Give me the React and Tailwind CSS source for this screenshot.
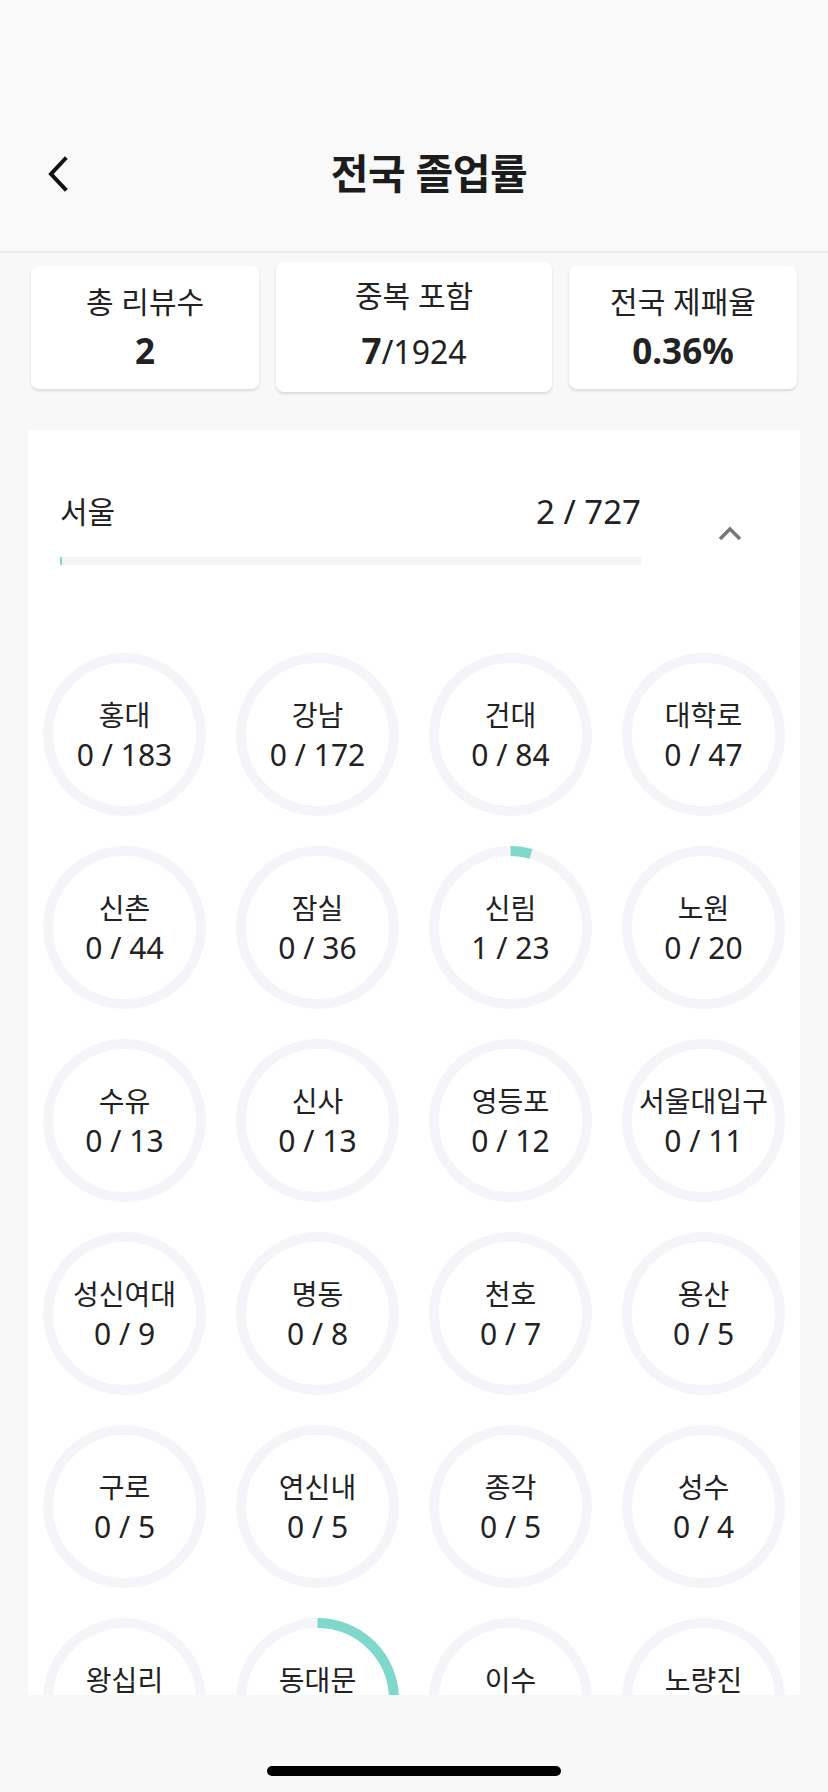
import React from 'react'

const regions = [
  { name: '홍대', done: 0, total: 183 },
  { name: '강남', done: 0, total: 172 },
  { name: '건대', done: 0, total: 84 },
  { name: '대학로', done: 0, total: 47 },
  { name: '신촌', done: 0, total: 44 },
  { name: '잠실', done: 0, total: 36 },
  { name: '신림', done: 1, total: 23 },
  { name: '노원', done: 0, total: 20 },
  { name: '수유', done: 0, total: 13 },
  { name: '신사', done: 0, total: 13 },
  { name: '영등포', done: 0, total: 12 },
  { name: '서울대입구', done: 0, total: 11 },
  { name: '성신여대', done: 0, total: 9 },
  { name: '명동', done: 0, total: 8 },
  { name: '천호', done: 0, total: 7 },
  { name: '용산', done: 0, total: 5 },
  { name: '구로', done: 0, total: 5 },
  { name: '연신내', done: 0, total: 5 },
  { name: '종각', done: 0, total: 5 },
  { name: '성수', done: 0, total: 4 },
  { name: '왕십리', done: 0, total: 4 },
  { name: '동대문', done: 1, total: 4 },
  { name: '이수', done: 0, total: 3 },
  { name: '노량진', done: 0, total: 3 },
]

const font = { fontFamily: '"Noto Sans", "Noto Sans CJK KR", sans-serif' }

const Ring = ({ name, done, total }) => {
  const r = 76.5
  const c = 2 * Math.PI * r
  const len = total ? (done / total) * c : 0
  return (
    <div className="flex h-[193px] items-center justify-center">
      <div className="relative h-[163px] w-[163px]">
        <svg width="163" height="163" viewBox="0 0 163 163" className="absolute inset-0 -rotate-90">
          <circle cx="81.5" cy="81.5" r={r} fill="none" stroke="#f5f5f9" strokeWidth="10" />
          {done > 0 && (
            <circle
              cx="81.5"
              cy="81.5"
              r={r}
              fill="none"
              stroke="#80d8cd"
              strokeWidth="10"
              strokeDasharray={`${len} ${c}`}
            />
          )}
        </svg>
        <div className="absolute inset-0 flex flex-col items-center justify-center text-[#222]">
          <span className="whitespace-nowrap text-[28px] leading-[39px]">{name}</span>
          <span className="text-[30px] leading-[39px]">{done} / {total}</span>
        </div>
      </div>
    </div>
  )
}

const StatCard = ({ label, children, tall }) => (
  <div
    className={`flex flex-col items-center rounded-lg bg-white shadow-[0_2px_3px_rgba(0,0,0,0.12)] ${
      tall ? 'h-[130px] w-[276px] pt-[14px]' : 'h-[123px] w-[228px] pt-[16px]'
    }`}
  >
    <span className="text-[30px] leading-[40px] text-[#222]">{label}</span>
    <span className={`text-[35px] leading-[46px] text-[#222] ${tall ? 'mt-[12px]' : 'mt-[6px]'}`}>{children}</span>
  </div>
)

export default function App() {
  return (
    <div className="flex h-[1792px] flex-col overflow-hidden bg-[#f8f8f9]" style={font}>
      {/* Header */}
      <div className="flex h-[253px] shrink-0 flex-col border-b-2 border-[#ececec] bg-[#f9f9f9] pt-[124px]">
        <div className="relative flex h-[100px] w-full items-center justify-center pl-[30px]">
          <button className="absolute left-[44px] top-[31px] flex h-[38px] w-[28px] items-center justify-center">
            <svg width="24" height="36" viewBox="0 0 24 36" fill="none">
              <path d="M19 3 L5 18 L19 33" stroke="#111" strokeWidth="4" strokeLinecap="square" />
            </svg>
          </button>
          <h1 className="text-[41px] font-bold tracking-[-0.5px] text-[#1c1c1c]">전국 졸업률</h1>
        </div>
      </div>

      {/* Content */}
      <div className="flex-1 overflow-hidden">
        <div className="flex h-[142px] items-center justify-between px-[31px] pt-[6px]">
          <StatCard label="총 리뷰수">
            <span className="font-bold">2</span>
          </StatCard>
          <StatCard label="중복 포함" tall>
            <span className="font-bold">7</span>
            <span className="text-[32px]">/1924</span>
          </StatCard>
          <StatCard label="전국 제패율">
            <span className="font-bold">0.36%</span>
          </StatCard>
        </div>

        <div className="mx-[28px] mt-[35px] bg-white">
          <div className="flex items-start pl-[32px] pt-[60px]">
            <div className="w-[581px]">
              <div className="flex items-center justify-between leading-[44px] text-[#222]">
                <span className="text-[30px]">서울</span>
                <span className="text-[33px]">2 / 727</span>
              </div>
              <div className="mt-[23px] h-[8px] w-full bg-[#f3f4f8]">
                <div className="h-full bg-[#80d8cd]" style={{ width: `${Math.max((2 / 727) * 100, 0.35)}%` }} />
              </div>
            </div>
            <div className="ml-[77px] mt-[36px]">
              <svg width="24" height="16" viewBox="0 0 24 16" fill="none">
                <path d="M2 13 L12 3 L22 13" stroke="#777" strokeWidth="3.5" />
              </svg>
            </div>
          </div>

          <div className="mt-[73px] grid grid-cols-4">
            {regions.map((r) => (
              <Ring key={r.name} {...r} />
            ))}
          </div>
        </div>
      </div>

      {/* Home indicator */}
      <div className="flex h-[97px] shrink-0 items-start justify-center bg-[#f8f8f9] pt-[71px]">
        <div className="h-[10px] w-[294px] rounded-full bg-black" />
      </div>
    </div>
  )
}
